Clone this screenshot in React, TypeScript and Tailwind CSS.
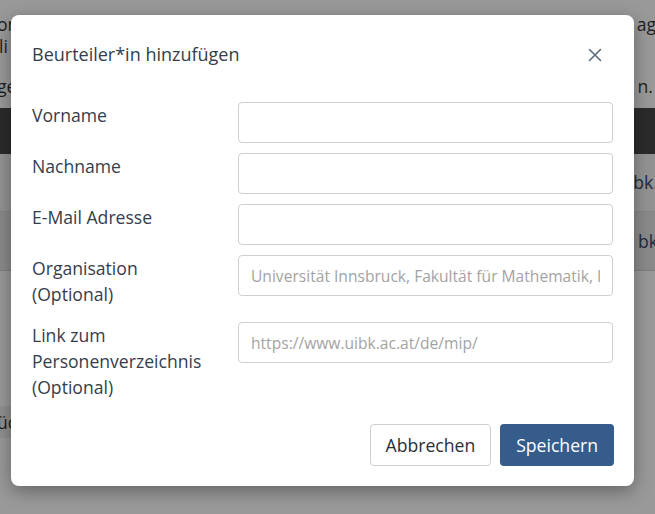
import React from "react";

const font = { fontFamily: '"Open Sans", "Noto Sans", Arial, sans-serif' };

function Row({ label, placeholder }: { label: React.ReactNode; placeholder?: string }) {
  return (
    <div className="grid grid-cols-[206px_1fr] items-start">
      <label className="text-[17.6px] leading-[26px] text-[#343d4c] pb-[5px]">{label}</label>
      <input
        className="h-[41px] w-full rounded-[4px] border border-[#cfcfcf] bg-white px-[12px] text-[15.6px] text-[#333] placeholder:text-[#a3a3a3] outline-none"
        style={font}
        placeholder={placeholder}
      />
    </div>
  );
}

export default function App() {
  return (
    <div className="relative h-[514px] w-[655px] overflow-hidden bg-[#999999]" style={font}>
      {/* background page (dimmed) */}
      <div className="flex flex-col text-[17.6px] text-[#1e1e1e]">
        <div className="h-[13px]" />
        <div className="flex justify-between leading-[22px]">
          <span className="-ml-[3px]">on</span>
          <span className="-mr-[1px]">ag</span>
        </div>
        <div className="leading-[22px]">
          <span className="-ml-[1px]">li</span>
        </div>
        <div className="h-[18px]" />
        <div className="flex justify-between leading-[22px]">
          <span className="-ml-[3px]">ge</span>
          <span className="mr-[2px]">n.</span>
        </div>
        <div className="h-[11px]" />
        <div className="h-[46px] bg-[#2b2b2b]" />
        <div className="flex h-[58px] items-center justify-end border-b border-[#848484] bg-[#939393]">
          <span className="-mr-[3px] text-[#1f2a3a]">bk.</span>
        </div>
        <div className="flex h-[59px] items-center justify-end border-b border-[#7e7e7e] bg-[#8a8a8a]">
          <span className="-mr-[3px] text-[#1f2a3a]">bk</span>
        </div>
        <div className="h-[135px]" />
        <div className="flex h-[32px] w-[40px] items-center bg-[#8f8f8f]">
          <span className="-ml-[3px]">üd</span>
        </div>
      </div>

      {/* modal */}
      <div className="absolute left-[11px] top-[15px] flex h-[471px] w-[623px] flex-col rounded-[8px] bg-white shadow-[0_5px_18px_rgba(0,0,0,0.35)]">
        <div className="flex items-center justify-between px-[21px] pt-[26px] pb-[34px]">
          <h5 className="text-[18px] leading-[27px] text-[#343d4c]">Beurteiler*in hinzufügen</h5>
          <button className="mr-[10px] flex h-[16px] w-[16px] items-center justify-center">
            <svg width="14" height="14" viewBox="0 0 14 14" fill="none">
              <path d="M1.5 1.5 L12.5 12.5 M12.5 1.5 L1.5 12.5" stroke="#5b6a80" strokeWidth="1.6" strokeLinecap="round" />
            </svg>
          </button>
        </div>
        <div className="flex flex-col gap-[10px] px-[21px]">
          <Row label="Vorname" />
          <Row label="Nachname" />
          <Row label="E-Mail Adresse" />
          <Row
            label={
              <>
                Organisation
                <br />
                (Optional)
              </>
            }
            placeholder="Universität Innsbruck, Fakultät für Mathematik, Informatik und Physik"
          />
          <Row
            label={
              <>
                Link zum
                <br />
                Personenverzeichnis
                <br />
                (Optional)
              </>
            }
            placeholder="https://www.uibk.ac.at/de/mip/"
          />
        </div>
        <div className="mt-[19px] flex justify-end gap-[9px] px-[20px]">
          <button className="h-[42px] rounded-[4px] border border-[#cfcfcf] bg-white px-[15px] text-[17.6px] text-[#2a2f36]">
            Abbrechen
          </button>
          <button className="h-[42px] rounded-[4px] bg-[#365c8c] px-[16px] text-[17.6px] text-white">
            Speichern
          </button>
        </div>
      </div>
    </div>
  );
}
